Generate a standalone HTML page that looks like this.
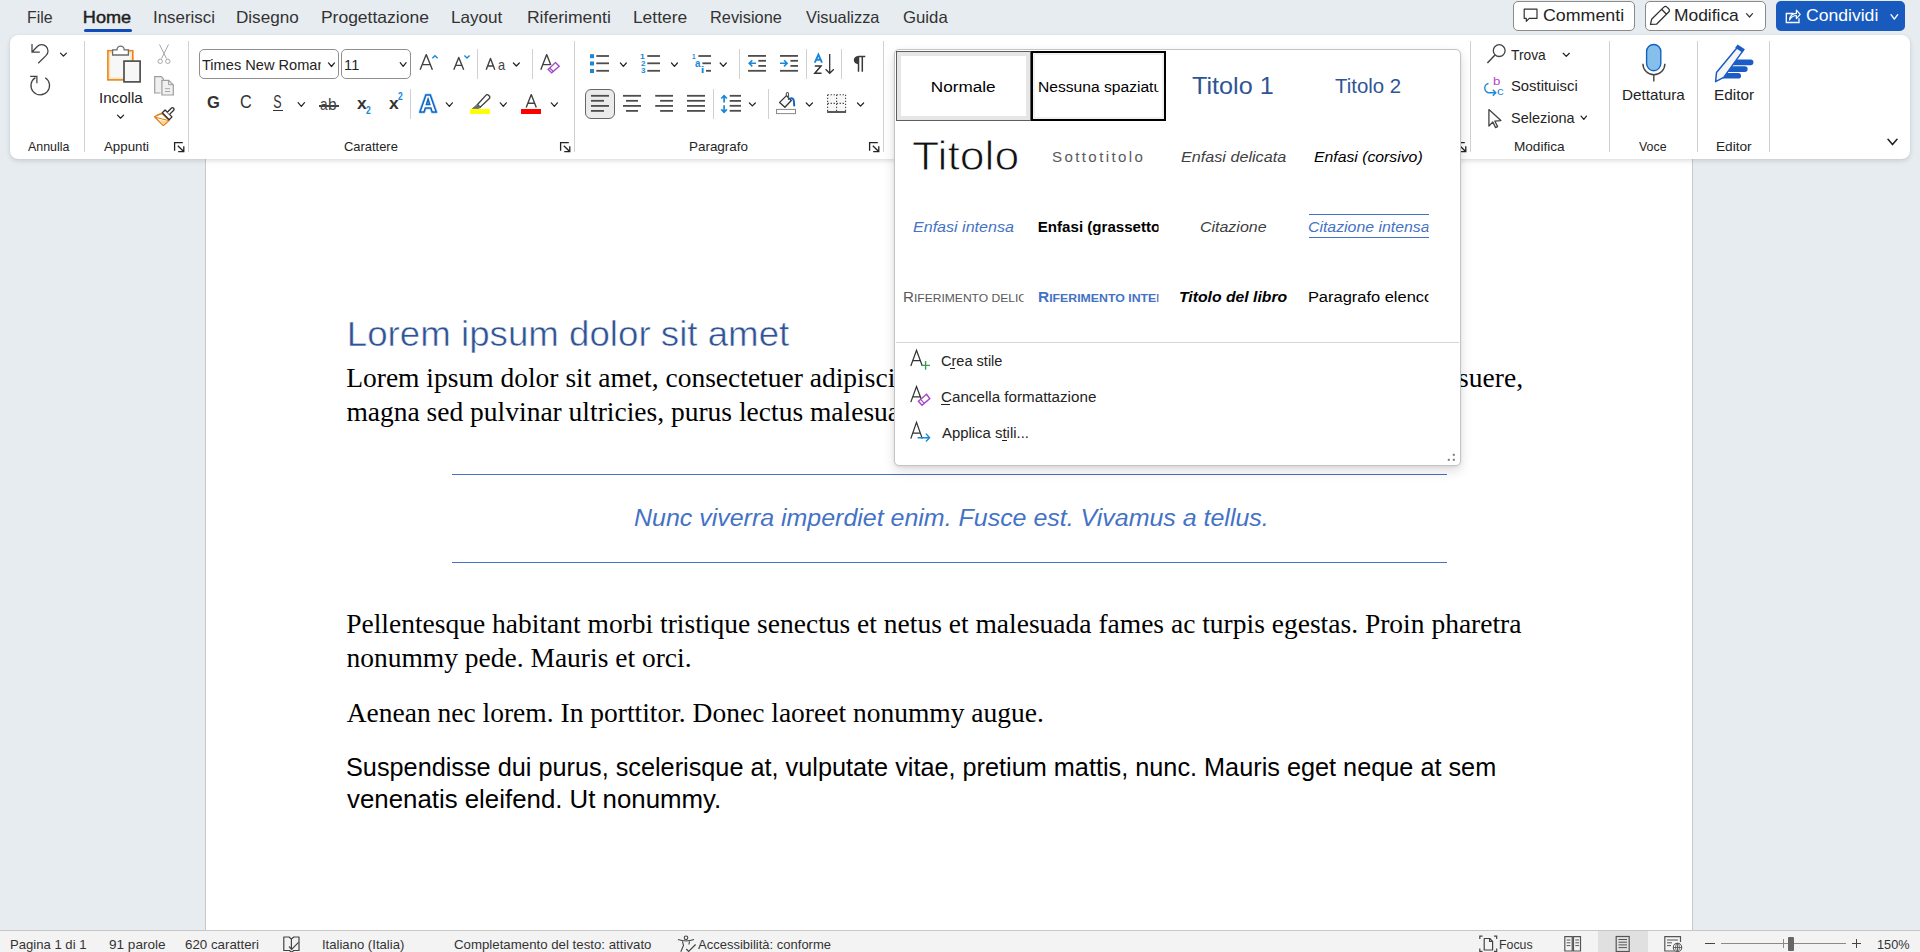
<!DOCTYPE html>
<html><head><meta charset="utf-8"><style>
html,body{margin:0;padding:0;width:1920px;height:952px;overflow:hidden;background:#e7ecf0;}
.t{position:absolute;white-space:pre;}
.r{position:absolute;}
svg.r{overflow:visible;}
</style></head><body>
<div class="r" style="left:205px;top:40px;width:1488px;height:890px;background:#fff;border-left:1px solid #c8c8c8;border-right:1px solid #c8c8c8;box-sizing:border-box;"></div>
<div class="r" style="left:0px;top:930px;width:1920px;height:22px;background:#f3f3f3;border-top:1px solid #c9c7c5;box-sizing:border-box;"></div>
<div class="t" style="left:26.70px;top:9.03px;font-size:16.5px;line-height:16.5px;font-family:'Liberation Sans',sans-serif;font-weight:400;font-style:normal;color:#333333;transform:scaleX(0.9634);transform-origin:1.30px 0;">File</div>
<div class="t" style="left:83.40px;top:9.03px;font-size:16.5px;line-height:16.5px;font-family:'Liberation Sans',sans-serif;font-weight:400;font-style:normal;color:#1f1f1f;transform:scaleX(1.0976);transform-origin:1.30px 0;-webkit-text-stroke:0.45px #1f1f1f;">Home</div>
<div class="t" style="left:152.50px;top:9.03px;font-size:16.5px;line-height:16.5px;font-family:'Liberation Sans',sans-serif;font-weight:400;font-style:normal;color:#333333;transform:scaleX(1.0242);transform-origin:1.50px 0;">Inserisci</div>
<div class="t" style="left:236.20px;top:9.03px;font-size:16.5px;line-height:16.5px;font-family:'Liberation Sans',sans-serif;font-weight:400;font-style:normal;color:#333333;transform:scaleX(1.0375);transform-origin:1.30px 0;">Disegno</div>
<div class="t" style="left:321.20px;top:9.03px;font-size:16.5px;line-height:16.5px;font-family:'Liberation Sans',sans-serif;font-weight:400;font-style:normal;color:#333333;transform:scaleX(1.0601);transform-origin:1.30px 0;">Progettazione</div>
<div class="t" style="left:451.20px;top:9.03px;font-size:16.5px;line-height:16.5px;font-family:'Liberation Sans',sans-serif;font-weight:400;font-style:normal;color:#333333;transform:scaleX(1.0373);transform-origin:1.30px 0;">Layout</div>
<div class="t" style="left:527.00px;top:9.03px;font-size:16.5px;line-height:16.5px;font-family:'Liberation Sans',sans-serif;font-weight:400;font-style:normal;color:#333333;transform:scaleX(1.0641);transform-origin:1.30px 0;">Riferimenti</div>
<div class="t" style="left:632.90px;top:9.03px;font-size:16.5px;line-height:16.5px;font-family:'Liberation Sans',sans-serif;font-weight:400;font-style:normal;color:#333333;transform:scaleX(1.0567);transform-origin:1.30px 0;">Lettere</div>
<div class="t" style="left:709.90px;top:9.03px;font-size:16.5px;line-height:16.5px;font-family:'Liberation Sans',sans-serif;font-weight:400;font-style:normal;color:#333333;transform:scaleX(0.9915);transform-origin:1.30px 0;">Revisione</div>
<div class="t" style="left:805.90px;top:9.03px;font-size:16.5px;line-height:16.5px;font-family:'Liberation Sans',sans-serif;font-weight:400;font-style:normal;color:#333333;transform:scaleX(0.9932);transform-origin:0.10px 0;">Visualizza</div>
<div class="t" style="left:902.50px;top:9.03px;font-size:16.5px;line-height:16.5px;font-family:'Liberation Sans',sans-serif;font-weight:400;font-style:normal;color:#333333;transform:scaleX(1.0162);transform-origin:0.80px 0;">Guida</div>
<div class="r" style="left:84px;top:29px;width:48px;height:3px;background:#0f4bb8;border-radius:2px;"></div>
<div class="r" style="left:10px;top:35px;width:1900px;height:124px;background:#fff;border-radius:8px;box-shadow:0 2px 5px rgba(0,0,0,0.13),0 0 1px rgba(0,0,0,0.12);"></div>
<div class="t" style="left:347.00px;top:316.87px;font-size:34.3px;line-height:34.3px;font-family:'Liberation Sans',sans-serif;font-weight:400;font-style:normal;color:#2f5496;transform:scaleX(1.0697);transform-origin:2.80px 0;-webkit-text-stroke:0.5px #fff;">Lorem ipsum dolor sit amet</div>
<div class="t" style="left:346.20px;top:363.62px;font-size:27.5px;line-height:27.5px;font-family:'Liberation Serif',sans-serif;font-weight:400;font-style:normal;color:#000;">Lorem ipsum dolor sit amet, consectetuer adipiscing elit. Maecenas porttitor congue massa. Fusce posuere,</div>
<div class="t" style="left:346.40px;top:397.97px;font-size:27.5px;line-height:27.5px;font-family:'Liberation Serif',sans-serif;font-weight:400;font-style:normal;color:#000;">magna sed pulvinar ultricies, purus lectus malesuada libero, sit amet commodo magna eros quis urna.</div>
<div class="r" style="left:452px;top:474px;width:995px;height:1px;background:#4472c4;"></div>
<div class="r" style="left:452px;top:562px;width:995px;height:1px;background:#4472c4;"></div>
<div class="t" style="left:633.60px;top:505.61px;font-size:24.8px;line-height:24.8px;font-family:'Liberation Sans',sans-serif;font-weight:400;font-style:italic;color:#4472c4;transform:scaleX(1.0064);transform-origin:0.80px 0;">Nunc viverra imperdiet enim. Fusce est. Vivamus a tellus.</div>
<div class="t" style="left:346.20px;top:610.47px;font-size:27.5px;line-height:27.5px;font-family:'Liberation Serif',sans-serif;font-weight:400;font-style:normal;color:#000;">Pellentesque habitant morbi tristique senectus et netus et malesuada fames ac turpis egestas. Proin pharetra</div>
<div class="t" style="left:346.40px;top:644.47px;font-size:27.5px;line-height:27.5px;font-family:'Liberation Serif',sans-serif;font-weight:400;font-style:normal;color:#000;">nonummy pede. Mauris et orci.</div>
<div class="t" style="left:346.70px;top:698.77px;font-size:27.5px;line-height:27.5px;font-family:'Liberation Serif',sans-serif;font-weight:400;font-style:normal;color:#000;">Aenean nec lorem. In porttitor. Donec laoreet nonummy augue.</div>
<div class="t" style="left:345.90px;top:755.47px;font-size:25.2px;line-height:25.2px;font-family:'Liberation Sans',sans-serif;font-weight:400;font-style:normal;color:#000;transform:scaleX(1.0031);transform-origin:1.10px 0;">Suspendisse dui purus, scelerisque at, vulputate vitae, pretium mattis, nunc. Mauris eget neque at sem</div>
<div class="t" style="left:346.90px;top:786.67px;font-size:25.2px;line-height:25.2px;font-family:'Liberation Sans',sans-serif;font-weight:400;font-style:normal;color:#000;transform:scaleX(1.0256);transform-origin:0.10px 0;">venenatis eleifend. Ut nonummy.</div>
<div class="r" style="left:84px;top:41px;width:1px;height:111px;background:#d1d1d1;"></div>
<div class="r" style="left:188px;top:41px;width:1px;height:111px;background:#d1d1d1;"></div>
<div class="r" style="left:574px;top:41px;width:1px;height:111px;background:#d1d1d1;"></div>
<div class="r" style="left:883px;top:41px;width:1px;height:111px;background:#d1d1d1;"></div>
<div class="r" style="left:1470px;top:41px;width:1px;height:111px;background:#d1d1d1;"></div>
<div class="r" style="left:1609px;top:41px;width:1px;height:111px;background:#d1d1d1;"></div>
<div class="r" style="left:1697px;top:41px;width:1px;height:111px;background:#d1d1d1;"></div>
<div class="r" style="left:1769px;top:41px;width:1px;height:111px;background:#d1d1d1;"></div>
<div class="t" style="left:28.40px;top:140.93px;font-size:12.6px;line-height:12.6px;font-family:'Liberation Sans',sans-serif;font-weight:400;font-style:normal;color:#242424;transform:scaleX(0.9833);transform-origin:0.00px 0;">Annulla</div>
<div class="t" style="left:104.30px;top:140.93px;font-size:12.6px;line-height:12.6px;font-family:'Liberation Sans',sans-serif;font-weight:400;font-style:normal;color:#242424;transform:scaleX(1.0549);transform-origin:0.00px 0;">Appunti</div>
<div class="t" style="left:344.20px;top:140.93px;font-size:12.6px;line-height:12.6px;font-family:'Liberation Sans',sans-serif;font-weight:400;font-style:normal;color:#242424;transform:scaleX(1.0253);transform-origin:0.60px 0;">Carattere</div>
<div class="t" style="left:689.00px;top:140.93px;font-size:12.6px;line-height:12.6px;font-family:'Liberation Sans',sans-serif;font-weight:400;font-style:normal;color:#242424;transform:scaleX(1.0688);transform-origin:1.00px 0;">Paragrafo</div>
<div class="t" style="left:1513.70px;top:140.93px;font-size:12.6px;line-height:12.6px;font-family:'Liberation Sans',sans-serif;font-weight:400;font-style:normal;color:#242424;transform:scaleX(1.0806);transform-origin:1.00px 0;">Modifica</div>
<div class="t" style="left:1639.40px;top:140.93px;font-size:12.6px;line-height:12.6px;font-family:'Liberation Sans',sans-serif;font-weight:400;font-style:normal;color:#242424;transform:scaleX(0.9818);transform-origin:0.10px 0;">Voce</div>
<div class="t" style="left:1715.60px;top:140.93px;font-size:12.6px;line-height:12.6px;font-family:'Liberation Sans',sans-serif;font-weight:400;font-style:normal;color:#242424;transform:scaleX(1.0852);transform-origin:1.00px 0;">Editor</div>
<svg class="r" style="left:0px;top:0px;" width="1" height="1" viewBox="0 0 1 1"><path d="M174.6,150.8 V142.6 H182.8 M177.8,145.7 L183.4,151.3 M178.2,151.6 H183.8 V146.2" fill="none" stroke="#242424" stroke-width="1.3"/></svg>
<svg class="r" style="left:0px;top:0px;" width="1" height="1" viewBox="0 0 1 1"><path d="M560.6,150.8 V142.6 H568.8 M563.8,145.7 L569.4,151.3 M564.2,151.6 H569.8 V146.2" fill="none" stroke="#242424" stroke-width="1.3"/></svg>
<svg class="r" style="left:0px;top:0px;" width="1" height="1" viewBox="0 0 1 1"><path d="M869.6,150.8 V142.6 H877.8 M872.8,145.7 L878.4,151.3 M873.2,151.6 H878.8 V146.2" fill="none" stroke="#242424" stroke-width="1.3"/></svg>
<svg class="r" style="left:0px;top:0px;" width="1" height="1" viewBox="0 0 1 1"><path d="M1456.6,150.8 V142.6 H1464.8 M1459.8,145.7 L1465.4,151.3 M1460.2,151.6 H1465.8 V146.2" fill="none" stroke="#242424" stroke-width="1.3"/></svg>
<svg class="r" style="left:0px;top:0px;" width="1" height="1" viewBox="0 0 1 1"><path d="M32,44 V52.2 H39.8 M32.3,51.8 L37.05,46.75 A6.3,6.3 0 1 1 45.95,55.65 L38.2,63.3" fill="none" stroke="#424242" stroke-width="1.25" stroke-linecap="butt" stroke-linejoin="miter" stroke-miterlimit="10" /></svg>
<svg class="r" style="left:0px;top:0px;" width="1" height="1" viewBox="0 0 1 1"><polyline points="60.5,53.1 63.45,56.1 66.4,53.1" fill="none" stroke="#242424" stroke-width="1.25" stroke-linecap="round" stroke-linejoin="round"/></svg>
<svg class="r" style="left:0px;top:0px;" width="1" height="1" viewBox="0 0 1 1"><path d="M45.2,77.7 A9.3,9.3 0 1 1 35.4,77.65 M30.2,76.3 H36.9 V83.2" fill="none" stroke="#424242" stroke-width="1.25" stroke-linecap="butt" stroke-linejoin="miter" stroke-miterlimit="10" /></svg>
<svg class="r" style="left:0px;top:0px;" width="1" height="1" viewBox="0 0 1 1"><rect x="107.9" y="50.7" width="24.9" height="29.2" fill="#f7f7f7" stroke="#e8821e" stroke-width="1.6"/><rect x="109.6" y="52.4" width="21.5" height="25.8" fill="none" stroke="#fbe2a0" stroke-width="1.2"/><path d="M112.6,55 V49.8 H117 A3.6,3.6 0 0 1 124.2,49.8 H128.4 V55 Z" fill="#fff" stroke="#6b6b6b" stroke-width="1.3"/><rect x="124" y="61.1" width="16.1" height="20.8" fill="#f7f7f7" stroke="#4f4f4f" stroke-width="1.7"/></svg>
<div class="t" style="left:98.70px;top:91.24px;font-size:14.6px;line-height:14.6px;font-family:'Liberation Sans',sans-serif;font-weight:400;font-style:normal;color:#242424;transform:scaleX(1.0367);transform-origin:1.30px 0;">Incolla</div>
<svg class="r" style="left:0px;top:0px;" width="1" height="1" viewBox="0 0 1 1"><polyline points="117.5,115.1 120.55,118.19999999999999 123.6,115.1" fill="none" stroke="#242424" stroke-width="1.25" stroke-linecap="round" stroke-linejoin="round"/></svg>
<svg class="r" style="left:0px;top:0px;" width="1" height="1" viewBox="0 0 1 1"><path d="M159.5,44.5 L166.5,58.6 M168.5,44.5 L161.5,58.6" stroke="#a8a8a8" stroke-width="1" fill="none"/><circle cx="160.2" cy="61.3" r="2.2" fill="none" stroke="#a8a8a8" stroke-width="1"/><circle cx="167.8" cy="61.3" r="2.2" fill="none" stroke="#a8a8a8" stroke-width="1"/></svg>
<svg class="r" style="left:0px;top:0px;" width="1" height="1" viewBox="0 0 1 1"><path d="M160.5,93 H154.7 V76.7 H161.2 L163.3,78.8 V80.5" fill="#f0f0f0" stroke="#9e9e9e" stroke-width="1.2"/><path d="M161.9,95 V80.4 H168.8 L173.3,84.9 V95 Z" fill="#f0f0f0" stroke="#9e9e9e" stroke-width="1.2"/><path d="M168.6,80.4 V84.7 H173.3" fill="none" stroke="#9e9e9e" stroke-width="1"/><path d="M165,88.7 H170.1 M165,91.5 H170.1" stroke="#a8a8a8" stroke-width="1"/></svg>
<svg class="r" style="left:0px;top:0px;" width="1" height="1" viewBox="0 0 1 1"><path d="M154.6,116.8 Q158.3,114.4 162,113.5 L169.1,120.3 Q166.2,123.4 163.2,125.6 Z" fill="#fff" stroke="#e07b12" stroke-width="1.3" stroke-linejoin="round"/><path d="M159.5,120.2 L168,120.9 L163.3,124.8 Z" fill="#fbd88a"/><path d="M155.2,117.2 L168.6,120.6" stroke="#e07b12" stroke-width="1"/><path d="M162.3,112.8 L165.1,110 L172,116.9 L169.2,119.7 Z" fill="#fff" stroke="#2f2f2f" stroke-width="1.3" stroke-linejoin="round"/><path d="M167.3,112.2 L171.5,108 A1.2,1.2 0 0 1 173.2,108 L173.7,108.5 A1.2,1.2 0 0 1 173.7,110.2 L169.5,114.4" fill="#fff" stroke="#2f2f2f" stroke-width="1.3" stroke-linejoin="round"/></svg>
<div class="r" style="left:199px;top:49px;width:140px;height:30px;border:1px solid #8f8f8f;border-radius:5px;box-sizing:border-box;background:#fff;"></div>
<div class="t" style="left:202.00px;top:57.84px;font-size:14.6px;line-height:14.6px;font-family:'Liberation Sans',sans-serif;font-weight:400;font-style:normal;color:#242424;width:119px;overflow:hidden;">Times New Roman</div>
<svg class="r" style="left:0px;top:0px;" width="1" height="1" viewBox="0 0 1 1"><polyline points="328.5,62.9 331.5,66.5 334.5,62.9" fill="none" stroke="#242424" stroke-width="1.25" stroke-linecap="round" stroke-linejoin="round"/></svg>
<div class="r" style="left:341px;top:49px;width:70px;height:30px;border:1px solid #8f8f8f;border-radius:5px;box-sizing:border-box;background:#fff;"></div>
<div class="t" style="left:344.10px;top:57.84px;font-size:14.6px;line-height:14.6px;font-family:'Liberation Sans',sans-serif;font-weight:400;font-style:normal;color:#242424;">11</div>
<svg class="r" style="left:0px;top:0px;" width="1" height="1" viewBox="0 0 1 1"><polyline points="400.2,62.7 403.15,66.3 406.1,62.7" fill="none" stroke="#242424" stroke-width="1.25" stroke-linecap="round" stroke-linejoin="round"/></svg>
<svg class="r" style="left:0px;top:0px;" width="1" height="1" viewBox="0 0 1 1"><path d="M420.1,69.8 L426.25,54.6 L432.4,69.8 M422.3,64.6 H430.2" fill="none" stroke="#424242" stroke-width="1.4" stroke-linecap="butt" stroke-linejoin="round" stroke-miterlimit="10" /></svg>
<svg class="r" style="left:0px;top:0px;" width="1" height="1" viewBox="0 0 1 1"><path d="M432.3,58.3 L435,55.7 L437.7,58.3" fill="none" stroke="#1b87d6" stroke-width="1.4" stroke-linecap="butt" stroke-linejoin="miter" stroke-miterlimit="10" /></svg>
<svg class="r" style="left:0px;top:0px;" width="1" height="1" viewBox="0 0 1 1"><path d="M453.8,69.8 L458.75,57.5 L463.7,69.8 M455.6,65.4 H461.9" fill="none" stroke="#424242" stroke-width="1.4" stroke-linecap="butt" stroke-linejoin="round" stroke-miterlimit="10" /></svg>
<svg class="r" style="left:0px;top:0px;" width="1" height="1" viewBox="0 0 1 1"><path d="M464.4,55.6 L467,58.1 L469.6,55.6" fill="none" stroke="#1b87d6" stroke-width="1.4" stroke-linecap="butt" stroke-linejoin="miter" stroke-miterlimit="10" /></svg>
<div class="r" style="left:477px;top:49px;width:1px;height:30px;background:#d1d1d1;"></div>
<svg class="r" style="left:0px;top:0px;" width="1" height="1" viewBox="0 0 1 1"><path d="M486.2,69.8 L490.5,58.5 L494.8,69.8 M487.7,66 H493.3" fill="none" stroke="#424242" stroke-width="1.4" stroke-linecap="butt" stroke-linejoin="round" stroke-miterlimit="10" /></svg>
<div class="t" style="left:497.60px;top:57.53px;font-size:14.5px;line-height:14.5px;font-family:'Liberation Sans',sans-serif;font-weight:400;font-style:normal;color:#424242;transform:scaleX(0.8800);transform-origin:0.60px 0;">a</div>
<svg class="r" style="left:0px;top:0px;" width="1" height="1" viewBox="0 0 1 1"><polyline points="513.4,63.0 516.3499999999999,66.0 519.3,63.0" fill="none" stroke="#242424" stroke-width="1.25" stroke-linecap="round" stroke-linejoin="round"/></svg>
<div class="r" style="left:532px;top:49px;width:1px;height:30px;background:#d1d1d1;"></div>
<svg class="r" style="left:0px;top:0px;" width="1" height="1" viewBox="0 0 1 1"><path d="M540.8,69.8 L546.7,54.6 L550.8,65 M543.2,64.6 H550.2" fill="none" stroke="#424242" stroke-width="1.4" stroke-linecap="butt" stroke-linejoin="round" stroke-miterlimit="10" /></svg>
<svg class="r" style="left:0px;top:0px;" width="1" height="1" viewBox="0 0 1 1"><path d="M555.4,62.6 L559.2,66.3 L551.7,72.9 L548.2,69.4 Z" fill="#fff" stroke="#a347c9" stroke-width="1.4" stroke-linejoin="miter"/><path d="M549.6,67.8 L553.3,71.5" stroke="#a347c9" stroke-width="1.2"/></svg>
<div class="t" style="left:207.40px;top:94.26px;font-size:17.3px;line-height:17.3px;font-family:'Liberation Sans',sans-serif;font-weight:700;font-style:normal;color:#333;transform:scaleX(0.9573);transform-origin:0.70px 0;">G</div>
<div class="t" style="left:240.00px;top:94.09px;font-size:17.5px;line-height:17.5px;font-family:'Liberation Sans',sans-serif;font-weight:400;font-style:normal;color:#333;transform:scaleX(0.9273);transform-origin:0.90px 0;">C</div>
<div class="t" style="left:273.20px;top:94.09px;font-size:17.5px;line-height:17.5px;font-family:'Liberation Sans',sans-serif;font-weight:400;font-style:normal;color:#333;transform:scaleX(0.7129);transform-origin:0.80px 0;">S</div>
<div class="r" style="left:273px;top:110px;width:10px;height:1.4px;background:#333;"></div>
<svg class="r" style="left:0px;top:0px;" width="1" height="1" viewBox="0 0 1 1"><polyline points="298.1,102.7 301.3,106.3 304.5,102.7" fill="none" stroke="#242424" stroke-width="1.25" stroke-linecap="round" stroke-linejoin="round"/></svg>
<div class="t" style="left:320.30px;top:96.76px;font-size:16px;line-height:16px;font-family:'Liberation Sans',sans-serif;font-weight:400;font-style:normal;color:#444;transform:scaleX(0.8537);transform-origin:0.70px 0;">a</div>
<div class="t" style="left:327.80px;top:96.76px;font-size:16px;line-height:16px;font-family:'Liberation Sans',sans-serif;font-weight:400;font-style:normal;color:#444;transform:scaleX(0.9722);transform-origin:1.00px 0;">b</div>
<div class="r" style="left:319px;top:105.2px;width:20px;height:1.8px;background:#444;"></div>
<div class="t" style="left:356.60px;top:94.83px;font-size:16.5px;line-height:16.5px;font-family:'Liberation Sans',sans-serif;font-weight:700;font-style:normal;color:#333;transform:scaleX(1.0562);transform-origin:0.10px 0;">x</div>
<div class="t" style="left:366.10px;top:105.73px;font-size:10px;line-height:10px;font-family:'Liberation Sans',sans-serif;font-weight:700;font-style:normal;color:#1b87d6;transform:scaleX(0.8571);transform-origin:0.30px 0;">2</div>
<div class="t" style="left:388.90px;top:94.83px;font-size:16.5px;line-height:16.5px;font-family:'Liberation Sans',sans-serif;font-weight:700;font-style:normal;color:#333;transform:scaleX(1.0562);transform-origin:0.10px 0;">x</div>
<div class="t" style="left:397.50px;top:91.53px;font-size:10px;line-height:10px;font-family:'Liberation Sans',sans-serif;font-weight:700;font-style:normal;color:#1b87d6;transform:scaleX(0.8571);transform-origin:0.30px 0;">2</div>
<div class="r" style="left:410px;top:89px;width:1px;height:30px;background:#d1d1d1;"></div>
<svg class="r" style="left:0px;top:0px;" width="1" height="1" viewBox="0 0 1 1"><path d="M420,112 L426,95 H430.2 L436.2,112 H432.2 L430.9,108 H425.3 L424,112 Z M426.4,104.6 H429.8 L428.1,99 Z" fill="#fff" stroke="#9fd0f5" stroke-width="3" stroke-linejoin="round"/><path d="M420,112 L426,95 H430.2 L436.2,112 H432.2 L430.9,108 H425.3 L424,112 Z M426.4,104.6 H429.8 L428.1,99 Z" fill="#fff" stroke="#1064c0" stroke-width="1.5" stroke-linejoin="miter"/></svg>
<svg class="r" style="left:0px;top:0px;" width="1" height="1" viewBox="0 0 1 1"><polyline points="446.3,102.8 449.35,106.3 452.4,102.8" fill="none" stroke="#242424" stroke-width="1.25" stroke-linecap="round" stroke-linejoin="round"/></svg>
<svg class="r" style="left:0px;top:0px;" width="1" height="1" viewBox="0 0 1 1"><path d="M477.5,104.5 L485.8,95.4 A1.8,1.8 0 0 1 488.5,95.2 L489.3,96 A1.8,1.8 0 0 1 489.1,98.7 L480.2,107.2 Z" fill="#fff" stroke="#3b3b3b" stroke-width="1.3"/><path d="M477.2,104.4 L480.4,107.6 L478.2,108.6 L472.4,108.6 Z" fill="#6b6b6b" stroke="#6b6b6b" stroke-width="0.8"/></svg>
<div class="r" style="left:470px;top:109px;width:20px;height:5px;background:#ffff00;"></div>
<svg class="r" style="left:0px;top:0px;" width="1" height="1" viewBox="0 0 1 1"><polyline points="500.3,102.8 503.3,106.3 506.3,102.8" fill="none" stroke="#242424" stroke-width="1.25" stroke-linecap="round" stroke-linejoin="round"/></svg>
<svg class="r" style="left:0px;top:0px;" width="1" height="1" viewBox="0 0 1 1"><path d="M526.2,107.6 L531.25,94.6 L536.3,107.6 M527.9,103.3 H534.6" fill="none" stroke="#424242" stroke-width="1.4" stroke-linecap="butt" stroke-linejoin="round" stroke-miterlimit="10" /></svg>
<div class="r" style="left:521px;top:109px;width:20px;height:5px;background:#ff0000;"></div>
<svg class="r" style="left:0px;top:0px;" width="1" height="1" viewBox="0 0 1 1"><polyline points="551.3,102.8 554.3499999999999,106.3 557.4,102.8" fill="none" stroke="#242424" stroke-width="1.25" stroke-linecap="round" stroke-linejoin="round"/></svg>
<svg class="r" style="left:0px;top:0px;" width="1" height="1" viewBox="0 0 1 1"><rect x="590" y="54.2" width="4" height="4" fill="#1b87d6"/><rect x="590" y="61.5" width="4" height="4" fill="#1b87d6"/><rect x="590" y="69" width="4" height="4" fill="#1b87d6"/><path d="M596.3,56 H609" stroke="#4d4d4d" stroke-width="1.8"/><path d="M596.3,63.3 H609" stroke="#4d4d4d" stroke-width="1.8"/><path d="M596.3,70.8 H609" stroke="#4d4d4d" stroke-width="1.8"/></svg>
<svg class="r" style="left:0px;top:0px;" width="1" height="1" viewBox="0 0 1 1"><polyline points="620.4,63.0 623.3499999999999,66.3 626.3,63.0" fill="none" stroke="#242424" stroke-width="1.25" stroke-linecap="round" stroke-linejoin="round"/></svg>
<svg class="r" style="left:0px;top:0px;" width="1" height="1" viewBox="0 0 1 1"><path d="M647.3,56 H660" stroke="#4d4d4d" stroke-width="1.8"/><path d="M647.3,63.3 H660" stroke="#4d4d4d" stroke-width="1.8"/><path d="M647.3,70.8 H660" stroke="#4d4d4d" stroke-width="1.8"/></svg>
<div class="t" style="left:640.20px;top:52.55px;font-size:7.5px;line-height:7.5px;font-family:'Liberation Sans',sans-serif;font-weight:700;font-style:normal;color:#1b87d6;transform:scaleX(1.1429);transform-origin:0.50px 0;">1</div>
<div class="t" style="left:640.50px;top:59.95px;font-size:7.5px;line-height:7.5px;font-family:'Liberation Sans',sans-serif;font-weight:700;font-style:normal;color:#1b87d6;transform:scaleX(1.0811);transform-origin:0.20px 0;">2</div>
<div class="t" style="left:640.50px;top:67.25px;font-size:7.5px;line-height:7.5px;font-family:'Liberation Sans',sans-serif;font-weight:700;font-style:normal;color:#1b87d6;transform:scaleX(1.0811);transform-origin:0.20px 0;">3</div>
<svg class="r" style="left:0px;top:0px;" width="1" height="1" viewBox="0 0 1 1"><polyline points="671.5,63.0 674.45,66.3 677.4,63.0" fill="none" stroke="#242424" stroke-width="1.25" stroke-linecap="round" stroke-linejoin="round"/></svg>
<svg class="r" style="left:0px;top:0px;" width="1" height="1" viewBox="0 0 1 1"><path d="M698.4,56 H711" stroke="#4d4d4d" stroke-width="1.8"/><path d="M702.4,63.3 H711" stroke="#4d4d4d" stroke-width="1.8"/><path d="M706,70.8 H711" stroke="#4d4d4d" stroke-width="1.8"/></svg>
<div class="t" style="left:691.80px;top:52.55px;font-size:7.5px;line-height:7.5px;font-family:'Liberation Sans',sans-serif;font-weight:700;font-style:normal;color:#1b87d6;transform:scaleX(0.8571);transform-origin:0.50px 0;">1</div>
<div class="t" style="left:694.70px;top:58.11px;font-size:10.5px;line-height:10.5px;font-family:'Liberation Sans',sans-serif;font-weight:700;font-style:normal;color:#1b87d6;transform:scaleX(0.9286);transform-origin:0.30px 0;">a</div>
<div class="t" style="left:701.30px;top:66.42px;font-size:8.6px;line-height:8.6px;font-family:'Liberation Sans',sans-serif;font-weight:700;font-style:normal;color:#1b87d6;transform:scaleX(1.5000);transform-origin:0.60px 0;">i</div>
<svg class="r" style="left:0px;top:0px;" width="1" height="1" viewBox="0 0 1 1"><polyline points="720.2,63.0 723.25,66.3 726.3,63.0" fill="none" stroke="#242424" stroke-width="1.25" stroke-linecap="round" stroke-linejoin="round"/></svg>
<div class="r" style="left:739px;top:49px;width:1px;height:30px;background:#d1d1d1;"></div>
<svg class="r" style="left:0px;top:0px;" width="1" height="1" viewBox="0 0 1 1"><path d="M748,55.9 H766" stroke="#4d4d4d" stroke-width="1.8"/><path d="M748,70.8 H766" stroke="#4d4d4d" stroke-width="1.8"/><path d="M758.3,60.8 H766" stroke="#4d4d4d" stroke-width="1.8"/><path d="M758.3,65.9 H766" stroke="#4d4d4d" stroke-width="1.8"/><path d="M756,63.3 H749.3 M752.3,60.2 L749.2,63.3 L752.3,66.4" fill="none" stroke="#1b87d6" stroke-width="1.6"/></svg>
<svg class="r" style="left:0px;top:0px;" width="1" height="1" viewBox="0 0 1 1"><path d="M780,55.9 H798" stroke="#4d4d4d" stroke-width="1.8"/><path d="M780,70.8 H798" stroke="#4d4d4d" stroke-width="1.8"/><path d="M790.4,60.8 H798" stroke="#4d4d4d" stroke-width="1.8"/><path d="M790.4,65.9 H798" stroke="#4d4d4d" stroke-width="1.8"/><path d="M780,63.3 H786.9 M784,60.2 L787.1,63.3 L784,66.4" fill="none" stroke="#1b87d6" stroke-width="1.6"/></svg>
<div class="r" style="left:806px;top:49px;width:1px;height:30px;background:#d1d1d1;"></div>
<svg class="r" style="left:0px;top:0px;" width="1" height="1" viewBox="0 0 1 1"><path d="M814.8,62.6 L818.4,54.6 L822,62.6 M816.1,59.8 H820.7" fill="none" stroke="#1b87d6" stroke-width="1.9"/><path d="M814.8,65.9 H821 L814.8,73.3 H821.5" fill="none" stroke="#333" stroke-width="1.5"/><path d="M829.7,54 V73 M825.6,69.2 L829.7,73.3 L833.8,69.2" fill="none" stroke="#333" stroke-width="1.3"/></svg>
<div class="r" style="left:841px;top:49px;width:1px;height:30px;background:#d1d1d1;"></div>
<svg class="r" style="left:0px;top:0px;" width="1" height="1" viewBox="0 0 1 1"><path d="M858.2,56.6 H865.3 M858.5,56.6 V71.8 M862.3,56.6 V71.8" fill="none" stroke="#3a3a3a" stroke-width="1.5"/><path d="M859,56 C852.2,55.6 852,64.6 859,64.2 Z" fill="#3a3a3a"/></svg>
<div class="r" style="left:585px;top:89px;width:30px;height:30px;border:1px solid #666;border-radius:6px;background:#ebebeb;box-sizing:border-box;"></div>
<svg class="r" style="left:0px;top:0px;" width="1" height="1" viewBox="0 0 1 1"><path d="M591,95.8 H609" stroke="#4d4d4d" stroke-width="1.8"/><path d="M591,105.9 H609" stroke="#4d4d4d" stroke-width="1.8"/><path d="M591,100.8 H604" stroke="#4d4d4d" stroke-width="1.8"/><path d="M591,110.9 H604" stroke="#4d4d4d" stroke-width="1.8"/><path d="M623,95.8 H641" stroke="#4d4d4d" stroke-width="1.8"/><path d="M623,105.9 H641" stroke="#4d4d4d" stroke-width="1.8"/><path d="M626,100.8 H638" stroke="#4d4d4d" stroke-width="1.8"/><path d="M626,110.9 H638" stroke="#4d4d4d" stroke-width="1.8"/><path d="M655.2,95.8 H673" stroke="#4d4d4d" stroke-width="1.8"/><path d="M655.2,105.9 H673" stroke="#4d4d4d" stroke-width="1.8"/><path d="M660.1,100.8 H673" stroke="#4d4d4d" stroke-width="1.8"/><path d="M660.1,110.9 H673" stroke="#4d4d4d" stroke-width="1.8"/><path d="M687,95.8 H705" stroke="#4d4d4d" stroke-width="1.8"/><path d="M687,100.8 H705" stroke="#4d4d4d" stroke-width="1.8"/><path d="M687,105.9 H705" stroke="#4d4d4d" stroke-width="1.8"/><path d="M687,110.9 H705" stroke="#4d4d4d" stroke-width="1.8"/></svg>
<div class="r" style="left:713px;top:89px;width:1px;height:30px;background:#d1d1d1;"></div>
<svg class="r" style="left:0px;top:0px;" width="1" height="1" viewBox="0 0 1 1"><path d="M729.7,95.8 H741" stroke="#4d4d4d" stroke-width="1.8"/><path d="M729.7,100.9 H741" stroke="#4d4d4d" stroke-width="1.8"/><path d="M729.7,105.8 H741" stroke="#4d4d4d" stroke-width="1.8"/><path d="M729.7,110.8 H741" stroke="#4d4d4d" stroke-width="1.8"/><path d="M724.1,95.6 V102.6 M721.3,98.5 L724.1,95.6 L726.9,98.5 M724.1,105.2 V112.2 M721.3,109.3 L724.1,112.2 L726.9,109.3" fill="none" stroke="#1b87d6" stroke-width="1.7"/></svg>
<svg class="r" style="left:0px;top:0px;" width="1" height="1" viewBox="0 0 1 1"><polyline points="749.4,103.0 752.3499999999999,105.89999999999999 755.3,103.0" fill="none" stroke="#242424" stroke-width="1.25" stroke-linecap="round" stroke-linejoin="round"/></svg>
<div class="r" style="left:768px;top:89px;width:1px;height:30px;background:#d1d1d1;"></div>
<svg class="r" style="left:0px;top:0px;" width="1" height="1" viewBox="0 0 1 1"><path d="M779.6,102.4 L786.5,95.6 L791.3,100.5 L784.9,107.3 Z" fill="#f7f7f7" stroke="#333" stroke-width="1.3" stroke-linejoin="round"/><path d="M786.3,96 V93.6 A1.1,1.1 0 0 1 788.5,93.6 V100" fill="none" stroke="#555" stroke-width="1.1"/><path d="M790.2,98.6 Q794.4,96.6 794.2,105.6" fill="none" stroke="#1064c0" stroke-width="2" stroke-linecap="round"/><rect x="776.5" y="109.4" width="19" height="4.2" fill="#fff" stroke="#8a8a8a" stroke-width="1"/></svg>
<svg class="r" style="left:0px;top:0px;" width="1" height="1" viewBox="0 0 1 1"><polyline points="806.3,103.0 809.3499999999999,106.1 812.4,103.0" fill="none" stroke="#242424" stroke-width="1.25" stroke-linecap="round" stroke-linejoin="round"/></svg>
<svg class="r" style="left:0px;top:0px;" width="1" height="1" viewBox="0 0 1 1"><rect x="827.6" y="94.7" width="18" height="17.5" fill="#f7f7f7"/><path d="M827.6,94.7 H845.6 V112 M827.6,94.7 V112 M836.6,94.7 V112 M827.6,103.4 H845.6" fill="none" stroke="#3f3f3f" stroke-width="1.1" stroke-dasharray="1.3,1.7"/><path d="M827.1,112 H846.1" stroke="#444" stroke-width="1.8"/></svg>
<svg class="r" style="left:0px;top:0px;" width="1" height="1" viewBox="0 0 1 1"><polyline points="857.5,103.0 860.55,106.1 863.6,103.0" fill="none" stroke="#242424" stroke-width="1.25" stroke-linecap="round" stroke-linejoin="round"/></svg>
<svg class="r" style="left:0px;top:0px;" width="1" height="1" viewBox="0 0 1 1"><circle cx="1499.2" cy="50.6" r="5.9" fill="none" stroke="#444" stroke-width="1.3"/><path d="M1495,54.9 L1487.4,62.9" stroke="#444" stroke-width="1.5"/></svg>
<div class="t" style="left:1511.20px;top:47.64px;font-size:14.6px;line-height:14.6px;font-family:'Liberation Sans',sans-serif;font-weight:400;font-style:normal;color:#242424;transform:scaleX(0.9452);transform-origin:0.30px 0;">Trova</div>
<svg class="r" style="left:0px;top:0px;" width="1" height="1" viewBox="0 0 1 1"><polyline points="1563.2,53.3 1566.25,56.4 1569.3,53.3" fill="none" stroke="#242424" stroke-width="1.25" stroke-linecap="round" stroke-linejoin="round"/></svg>
<svg class="r" style="left:0px;top:0px;" width="1" height="1" viewBox="0 0 1 1"><path d="M1488.5,83.5 A3.6,4 0 0 0 1489.5,92.8 H1495.5 M1492.8,89.8 L1495.8,92.8 L1492.8,95.8" fill="none" stroke="#1b87d6" stroke-width="1.4"/></svg>
<div class="t" style="left:1492.90px;top:75.67px;font-size:11.5px;line-height:11.5px;font-family:'Liberation Sans',sans-serif;font-weight:400;font-style:normal;color:#b146c2;transform:scaleX(1.1538);transform-origin:0.70px 0;">b</div>
<div class="t" style="left:1497.30px;top:86.27px;font-size:11.5px;line-height:11.5px;font-family:'Liberation Sans',sans-serif;font-weight:400;font-style:normal;color:#1b87d6;transform:scaleX(1.1429);transform-origin:0.50px 0;">c</div>
<div class="t" style="left:1510.80px;top:79.44px;font-size:14.6px;line-height:14.6px;font-family:'Liberation Sans',sans-serif;font-weight:400;font-style:normal;color:#242424;transform:scaleX(1.0156);transform-origin:0.70px 0;">Sostituisci</div>
<svg class="r" style="left:0px;top:0px;" width="1" height="1" viewBox="0 0 1 1"><path d="M1488.9,109.6 V126.1 L1492.8,122 L1495.6,127.6 L1497.6,126.6 L1494.9,121.2 L1500.9,120.6 Z" fill="#fff" stroke="#444" stroke-width="1.3" stroke-linejoin="round"/></svg>
<div class="t" style="left:1510.80px;top:111.24px;font-size:14.6px;line-height:14.6px;font-family:'Liberation Sans',sans-serif;font-weight:400;font-style:normal;color:#242424;transform:scaleX(0.9905);transform-origin:0.70px 0;">Seleziona</div>
<svg class="r" style="left:0px;top:0px;" width="1" height="1" viewBox="0 0 1 1"><polyline points="1581.1,116.1 1583.8,119.39999999999999 1586.5,116.1" fill="none" stroke="#242424" stroke-width="1.25" stroke-linecap="round" stroke-linejoin="round"/></svg>
<svg class="r" style="left:0px;top:0px;" width="1" height="1" viewBox="0 0 1 1"><rect x="1646.6" y="44.5" width="14.2" height="26.2" rx="7.1" fill="#86bfec" stroke="#1064c0" stroke-width="1.4"/><path d="M1642.9,63.8 A10.9,10.9 0 0 0 1664.9,63.8 M1653.8,74.8 V81.6" fill="none" stroke="#444" stroke-width="1.4"/></svg>
<div class="t" style="left:1621.60px;top:88.44px;font-size:14.6px;line-height:14.6px;font-family:'Liberation Sans',sans-serif;font-weight:400;font-style:normal;color:#242424;transform:scaleX(1.0459);transform-origin:1.20px 0;">Dettatura</div>
<svg class="r" style="left:0px;top:0px;" width="1" height="1" viewBox="0 0 1 1"><path d="M1729,59.5 H1750.6 A2.8,2.8 0 0 1 1750.6,65.2 H1729 Z M1724.6,66.2 H1744.8 A2.8,2.8 0 0 1 1744.8,71.9 H1724.6 Z M1721.2,72.9 H1738.2 A2.8,2.8 0 0 1 1738.2,78.6 H1721.2 Z" fill="#1c5cc7"/><path d="M1738.3,46.3 L1743.6,49.9 L1723.7,77.4 L1715.6,81.6 L1716.5,72.6 Z" fill="#f5f5f5" stroke="#1c5cc7" stroke-width="1.5" stroke-linejoin="round"/><path d="M1737.6,44.4 L1744.8,49.2 L1742.4,52.6 L1735.2,47.8 Z" fill="#1c5cc7"/></svg>
<div class="t" style="left:1713.80px;top:88.44px;font-size:14.6px;line-height:14.6px;font-family:'Liberation Sans',sans-serif;font-weight:400;font-style:normal;color:#242424;transform:scaleX(1.0545);transform-origin:1.20px 0;">Editor</div>
<svg class="r" style="left:0px;top:0px;" width="1" height="1" viewBox="0 0 1 1"><polyline points="1888.0,139.3 1892.5,144.6 1897.0,139.3" fill="none" stroke="#242424" stroke-width="1.6" stroke-linecap="round" stroke-linejoin="round"/></svg>
<div class="r" style="left:1513px;top:1px;width:122px;height:30px;border:1px solid #8a8a8a;border-radius:5px;background:#fff;box-sizing:border-box;"></div>
<svg class="r" style="left:0px;top:0px;" width="1" height="1" viewBox="0 0 1 1"><path d="M1524.2,9.2 H1537 V18.4 H1529.3 L1526.3,21.3 V18.4 H1524.2 Z" fill="none" stroke="#333" stroke-width="1.2" stroke-linejoin="round"/></svg>
<div class="t" style="left:1542.50px;top:7.85px;font-size:16.6px;line-height:16.6px;font-family:'Liberation Sans',sans-serif;font-weight:400;font-style:normal;color:#242424;transform:scaleX(1.0732);transform-origin:0.80px 0;">Commenti</div>
<div class="r" style="left:1645px;top:1px;width:121px;height:30px;border:1px solid #8a8a8a;border-radius:5px;background:#fff;box-sizing:border-box;"></div>
<svg class="r" style="left:0px;top:0px;" width="1" height="1" viewBox="0 0 1 1"><path d="M1650.5,24.4 L1651.6,19.3 L1663.8,7.1 A2.2,2.2 0 0 1 1667,7.1 L1668.7,8.8 A2.2,2.2 0 0 1 1668.7,12 L1656.5,24.2 Z M1661.6,9.3 L1666.5,14.2" fill="none" stroke="#333" stroke-width="1.3" stroke-linejoin="round"/></svg>
<div class="t" style="left:1674.10px;top:7.85px;font-size:16.6px;line-height:16.6px;font-family:'Liberation Sans',sans-serif;font-weight:400;font-style:normal;color:#242424;transform:scaleX(1.0497);transform-origin:1.40px 0;">Modifica</div>
<svg class="r" style="left:0px;top:0px;" width="1" height="1" viewBox="0 0 1 1"><polyline points="1746.5,13.7 1749.5,17.0 1752.5,13.7" fill="none" stroke="#333" stroke-width="1.2" stroke-linecap="round" stroke-linejoin="round"/></svg>
<div class="r" style="left:1776px;top:1px;width:129px;height:30px;border-radius:5px;background:#185abd;"></div>
<svg class="r" style="left:0px;top:0px;" width="1" height="1" viewBox="0 0 1 1"><path d="M1793.5,13.5 H1786.3 V22.5 H1799 V18.2" fill="none" stroke="#fff" stroke-width="1.3"/><path d="M1789.5,19.8 Q1790.5,13.6 1796.4,13.4 V10.2 L1800.2,14.4 L1796.4,18.6 V15.5 Q1792.3,15.5 1789.5,19.8 Z" fill="none" stroke="#fff" stroke-width="1.2" stroke-linejoin="round"/></svg>
<div class="t" style="left:1805.50px;top:7.85px;font-size:16.6px;line-height:16.6px;font-family:'Liberation Sans',sans-serif;font-weight:400;font-style:normal;color:#fff;transform:scaleX(1.0602);transform-origin:0.80px 0;">Condividi</div>
<svg class="r" style="left:0px;top:0px;" width="1" height="1" viewBox="0 0 1 1"><polyline points="1891.0,14.7 1894.35,19.1 1897.7,14.7" fill="none" stroke="#fff" stroke-width="1.4" stroke-linecap="round" stroke-linejoin="round"/></svg>
<div class="r" style="left:894px;top:49px;width:567px;height:417px;background:#fff;border:1px solid #c4c4c4;border-radius:5px;box-sizing:border-box;box-shadow:0 5px 12px rgba(0,0,0,0.13),0 1px 3px rgba(0,0,0,0.07);"></div>
<div class="r" style="left:896px;top:51px;width:135px;height:70px;border:1px solid #5e5e5e;box-sizing:border-box;"></div>
<div class="r" style="left:897px;top:52px;width:133px;height:68px;border:4px solid #e6e6e6;box-sizing:border-box;"></div>
<div class="r" style="left:1031px;top:51px;width:135px;height:70px;border:2px solid #000;box-sizing:border-box;"></div>
<div class="r" style="left:1033px;top:53px;width:131px;height:66px;border:2px solid #f0f0f0;box-sizing:border-box;"></div>
<div class="t" style="left:930.60px;top:79.02px;font-size:15.1px;line-height:15.1px;font-family:'Liberation Sans',sans-serif;font-weight:400;font-style:normal;color:#000;transform:scaleX(1.1359);transform-origin:1.20px 0;">Normale</div>
<div class="r" style="left:0;top:0;width:1920px;height:952px;clip-path:inset(53px 761.5px 833px 1035px);"><div class="t" style="left:1037.70px;top:79.02px;font-size:15.1px;line-height:15.1px;font-family:'Liberation Sans',sans-serif;font-weight:400;font-style:normal;color:#000;transform:scaleX(1.0350);transform-origin:1.20px 0;">Nessuna spaziatura</div></div>
<div class="t" style="left:1191.80px;top:74.54px;font-size:23.7px;line-height:23.7px;font-family:'Liberation Sans',sans-serif;font-weight:400;font-style:normal;color:#2f5496;transform:scaleX(1.0638);transform-origin:0.50px 0;">Titolo 1</div>
<div class="t" style="left:1335.20px;top:76.30px;font-size:20.2px;line-height:20.2px;font-family:'Liberation Sans',sans-serif;font-weight:400;font-style:normal;color:#2f5496;transform:scaleX(1.0094);transform-origin:0.40px 0;">Titolo 2</div>
<div class="t" style="left:912.00px;top:135.55px;font-size:40.7px;line-height:40.7px;font-family:'Liberation Sans',sans-serif;font-weight:400;font-style:normal;color:#111;transform:scaleX(1.0954);transform-origin:0.90px 0;-webkit-text-stroke:0.9px #fff;">Titolo</div>
<div class="t" style="left:1052.30px;top:149.63px;font-size:14.5px;line-height:14.5px;font-family:'Liberation Sans',sans-serif;font-weight:400;font-style:normal;color:#5a5a5a;transform:scaleX(1.0400);transform-origin:0.70px 0;letter-spacing:2.3px;">Sottotitolo</div>
<div class="t" style="left:1181.00px;top:149.02px;font-size:15.1px;line-height:15.1px;font-family:'Liberation Sans',sans-serif;font-weight:400;font-style:italic;color:#404040;transform:scaleX(1.0720);transform-origin:0.50px 0;">Enfasi delicata</div>
<div class="t" style="left:1314.10px;top:149.02px;font-size:15.1px;line-height:15.1px;font-family:'Liberation Sans',sans-serif;font-weight:400;font-style:italic;color:#000;transform:scaleX(1.0448);transform-origin:0.50px 0;">Enfasi (corsivo)</div>
<div class="t" style="left:913.10px;top:219.02px;font-size:15.1px;line-height:15.1px;font-family:'Liberation Sans',sans-serif;font-weight:400;font-style:italic;color:#4472c4;transform:scaleX(1.0650);transform-origin:0.50px 0;">Enfasi intensa</div>
<div class="r" style="left:0;top:0;width:1920px;height:952px;clip-path:inset(190px 761.5px 692px 1035px);"><div class="t" style="left:1037.80px;top:219.02px;font-size:15.1px;line-height:15.1px;font-family:'Liberation Sans',sans-serif;font-weight:700;font-style:normal;color:#000;transform:scaleX(1.0000);transform-origin:1.00px 0;">Enfasi (grassetto)</div></div>
<div class="t" style="left:1199.50px;top:219.02px;font-size:15.1px;line-height:15.1px;font-family:'Liberation Sans',sans-serif;font-weight:400;font-style:italic;color:#404040;transform:scaleX(1.0584);transform-origin:0.80px 0;">Citazione</div>
<div class="r" style="left:0;top:0;width:1920px;height:952px;clip-path:inset(200px 491.5px 702px 1300px);"><div class="t" style="left:1307.90px;top:219.02px;font-size:15.1px;line-height:15.1px;font-family:'Liberation Sans',sans-serif;font-weight:400;font-style:italic;color:#4472c4;transform:scaleX(1.0500);transform-origin:0.80px 0;">Citazione intensa</div></div>
<div class="r" style="left:1308.5px;top:214px;width:120px;height:1px;background:#4472c4;"></div>
<div class="r" style="left:1308.5px;top:237px;width:120px;height:1px;background:#4472c4;"></div>
<div class="r" style="left:0;top:0;width:1920px;height:952px;clip-path:inset(270px 896.5px 632px 899px);"><div class="t" style="left:902.70px;top:289.61px;font-size:14.4px;line-height:14.4px;font-family:'Liberation Sans',sans-serif;font-weight:400;color:#595959;transform:scaleX(1.05);transform-origin:0 0;">R<span style="font-size:11.5px;">IFERIMENTO DELICATO</span></div></div>
<div class="r" style="left:0;top:0;width:1920px;height:952px;clip-path:inset(270px 761.5px 632px 1035px);"><div class="t" style="left:1037.80px;top:289.61px;font-size:14.4px;line-height:14.4px;font-family:'Liberation Sans',sans-serif;font-weight:700;color:#4472c4;transform:scaleX(1.07);transform-origin:0 0;">R<span style="font-size:11.5px;">IFERIMENTO INTENSO</span></div></div>
<div class="t" style="left:1178.70px;top:289.02px;font-size:15.1px;line-height:15.1px;font-family:'Liberation Sans',sans-serif;font-weight:700;font-style:italic;color:#000;transform:scaleX(1.0441);transform-origin:1.10px 0;">Titolo del libro</div>
<div class="r" style="left:0;top:0;width:1920px;height:952px;clip-path:inset(270px 491.5px 632px 1300px);"><div class="t" style="left:1307.50px;top:289.02px;font-size:15.1px;line-height:15.1px;font-family:'Liberation Sans',sans-serif;font-weight:400;font-style:normal;color:#000;transform:scaleX(1.0900);transform-origin:1.20px 0;">Paragrafo elenco</div></div>
<div class="r" style="left:896px;top:342px;width:563px;height:1px;background:#d6d6d6;"></div>
<svg class="r" style="left:0px;top:0px;" width="1" height="1" viewBox="0 0 1 1"><path d="M910.8,366 L916.5,350.4 L922.3,366 M912.8,360.6 H920.2" fill="none" stroke="#333" stroke-width="1.25"/><path d="M921.2,365.4 H930 M925.6,361 V369.8" stroke="#3a9e4a" stroke-width="1.4"/></svg>
<div class="t" style="left:940.70px;top:354.26px;font-size:14.7px;line-height:14.7px;font-family:'Liberation Sans',sans-serif;font-weight:400;font-style:normal;color:#242424;transform:scaleX(0.9901);transform-origin:0.70px 0;">Crea stile</div>
<div class="r" style="left:950.2px;top:368.2px;width:5px;height:1px;background:#242424;"></div>
<svg class="r" style="left:0px;top:0px;" width="1" height="1" viewBox="0 0 1 1"><path d="M910.8,402.1 L916.5,386.6 L921.2,399 M912.8,396.8 H920" fill="none" stroke="#333" stroke-width="1.25"/><path d="M926.5,394.3 L929.8,398.6 L922,405.3 L918.4,401.2 Z" fill="#fff" stroke="#a347c9" stroke-width="1.4"/><path d="M920.6,399.4 L924,403.2" stroke="#a347c9" stroke-width="1.2"/></svg>
<div class="t" style="left:940.70px;top:390.46px;font-size:14.7px;line-height:14.7px;font-family:'Liberation Sans',sans-serif;font-weight:400;font-style:normal;color:#242424;transform:scaleX(1.0342);transform-origin:0.70px 0;">Cancella formattazione</div>
<div class="r" style="left:941.4px;top:404.2px;width:8.5px;height:1px;background:#242424;"></div>
<svg class="r" style="left:0px;top:0px;" width="1" height="1" viewBox="0 0 1 1"><path d="M910.8,438.6 L916.5,422.4 L922.3,438.6 M912.8,433.2 H920.2" fill="none" stroke="#333" stroke-width="1.25"/><path d="M917.6,437.7 H929.2 M925.9,433.6 L929.6,437.7 L925.9,441.5" fill="none" stroke="#1b87d6" stroke-width="1.4"/></svg>
<div class="t" style="left:941.70px;top:426.36px;font-size:14.7px;line-height:14.7px;font-family:'Liberation Sans',sans-serif;font-weight:400;font-style:normal;color:#242424;transform:scaleX(1.0142);transform-origin:0.00px 0;">Applica stili...</div>
<div class="r" style="left:1002px;top:440.4px;width:4.8px;height:1px;background:#242424;"></div>
<svg class="r" style="left:0px;top:0px;" width="1" height="1" viewBox="0 0 1 1"><rect x="1452.8" y="453.8" width="2" height="2" fill="#7a7a7a"/><rect x="1447.8" y="458.8" width="2" height="2" fill="#7a7a7a"/><rect x="1452.8" y="458.8" width="2" height="2" fill="#7a7a7a"/></svg>
<div class="t" style="left:9.70px;top:938.68px;font-size:12.9px;line-height:12.9px;font-family:'Liberation Sans',sans-serif;font-weight:400;font-style:normal;color:#333;transform:scaleX(1.0163);transform-origin:1.00px 0;">Pagina 1 di 1</div>
<div class="t" style="left:109.40px;top:938.68px;font-size:12.9px;line-height:12.9px;font-family:'Liberation Sans',sans-serif;font-weight:400;font-style:normal;color:#333;transform:scaleX(1.0532);transform-origin:0.60px 0;">91 parole</div>
<div class="t" style="left:185.40px;top:938.68px;font-size:12.9px;line-height:12.9px;font-family:'Liberation Sans',sans-serif;font-weight:400;font-style:normal;color:#333;transform:scaleX(1.0328);transform-origin:0.60px 0;">620 caratteri</div>
<svg class="r" style="left:0px;top:0px;" width="1" height="1" viewBox="0 0 1 1"><path d="M283.8,937 V950.5 H289.5 L291.6,952.4 L293.6,950.5 H299 V937 H293.8 L291.4,939 L289,937 Z M291.4,939 V949" fill="none" stroke="#444" stroke-width="1.2" stroke-linejoin="round"/><path d="M289,946.5 L291.6,949.3 L298.5,942.4" fill="none" stroke="#444" stroke-width="1.2"/></svg>
<div class="t" style="left:321.80px;top:938.68px;font-size:12.9px;line-height:12.9px;font-family:'Liberation Sans',sans-serif;font-weight:400;font-style:normal;color:#333;transform:scaleX(1.0165);transform-origin:1.20px 0;">Italiano (Italia)</div>
<div class="t" style="left:454.10px;top:938.68px;font-size:12.9px;line-height:12.9px;font-family:'Liberation Sans',sans-serif;font-weight:400;font-style:normal;color:#333;transform:scaleX(1.0283);transform-origin:0.60px 0;">Completamento del testo: attivato</div>
<svg class="r" style="left:0px;top:0px;" width="1" height="1" viewBox="0 0 1 1"><circle cx="686" cy="937.8" r="1.8" fill="none" stroke="#444" stroke-width="1.1"/><path d="M678,939.6 Q686,942.5 694,939.6 M682.5,941.3 L683.5,945.5 L680.8,951.8 M689.5,941.3 L688.9,944.5" fill="none" stroke="#444" stroke-width="1.1"/><path d="M686.3,949 L688.6,951.5 L695.6,944.5" fill="none" stroke="#444" stroke-width="1.2"/></svg>
<div class="t" style="left:698.00px;top:938.68px;font-size:12.9px;line-height:12.9px;font-family:'Liberation Sans',sans-serif;font-weight:400;font-style:normal;color:#333;transform:scaleX(1.0091);transform-origin:0.00px 0;">Accessibilità: conforme</div>
<svg class="r" style="left:0px;top:0px;" width="1" height="1" viewBox="0 0 1 1"><path d="M1479.8,939 V936.2 H1482.5 M1494,936.2 H1496.7 V939 M1479.8,948.5 V951.3 H1482.5 M1494,951.3 H1496.7 V948.5" fill="none" stroke="#444" stroke-width="1.2"/><path d="M1484.2,938.5 H1489.8 L1492.6,941.3 V950 H1484.2 Z M1489.6,938.6 V941.5 H1492.5" fill="none" stroke="#444" stroke-width="1.2" stroke-linejoin="round"/></svg>
<div class="t" style="left:1499.20px;top:938.93px;font-size:12.6px;line-height:12.6px;font-family:'Liberation Sans',sans-serif;font-weight:400;font-style:normal;color:#333;transform:scaleX(0.9787);transform-origin:1.00px 0;">Focus</div>
<svg class="r" style="left:0px;top:0px;" width="1" height="1" viewBox="0 0 1 1"><path d="M1564.8,936.6 H1572.2 V951 H1564.8 Z M1573.5,936.6 H1580.5 V951 H1573.5 Z" fill="none" stroke="#555" stroke-width="1.2"/><path d="M1566.6,940 H1570.4 M1566.6,942.8 H1570.4 M1566.6,945.6 H1570.4 M1575.3,940 H1579 M1575.3,942.8 H1579 M1575.3,945.6 H1579" stroke="#555" stroke-width="1"/></svg>
<div class="r" style="left:1598px;top:931px;width:50px;height:21px;background:#e0e0e0;"></div>
<svg class="r" style="left:0px;top:0px;" width="1" height="1" viewBox="0 0 1 1"><rect x="1616.2" y="936.5" width="13" height="15" fill="none" stroke="#555" stroke-width="1.2"/><path d="M1618.5,939.5 H1627 M1618.5,942.2 H1627 M1618.5,944.9 H1627 M1618.5,947.6 H1627" stroke="#555" stroke-width="1"/></svg>
<svg class="r" style="left:0px;top:0px;" width="1" height="1" viewBox="0 0 1 1"><path d="M1675,951 H1664.8 V936.6 H1680.5 V942" fill="none" stroke="#555" stroke-width="1.2"/><path d="M1667,940 H1678 M1667,942.8 H1672 M1667,945.6 H1671" stroke="#555" stroke-width="1"/><circle cx="1677.5" cy="947.5" r="4.2" fill="#fff" stroke="#555" stroke-width="1.1"/><path d="M1673.3,947.5 H1681.7 M1677.5,943.3 V951.7" stroke="#555" stroke-width="0.9"/><ellipse cx="1677.5" cy="947.5" rx="1.9" ry="4.2" fill="none" stroke="#555" stroke-width="0.9"/></svg>
<div class="r" style="left:1705px;top:943px;width:9.5px;height:1.2px;background:#444;"></div>
<div class="r" style="left:1721px;top:943px;width:125px;height:1px;background:#8a8a8a;"></div>
<div class="r" style="left:1783px;top:939px;width:1px;height:9px;background:#8a8a8a;"></div>
<div class="r" style="left:1788px;top:937px;width:6px;height:14px;background:#666;border-radius:1px;"></div>
<div class="r" style="left:1851.7px;top:943px;width:9.6px;height:1.2px;background:#444;"></div>
<div class="r" style="left:1855.9px;top:938.5px;width:1.2px;height:9.6px;background:#444;"></div>
<div class="t" style="left:1877.10px;top:938.93px;font-size:12.6px;line-height:12.6px;font-family:'Liberation Sans',sans-serif;font-weight:400;font-style:normal;color:#333;transform:scaleX(1.0097);transform-origin:0.90px 0;">150%</div>
</body></html>
